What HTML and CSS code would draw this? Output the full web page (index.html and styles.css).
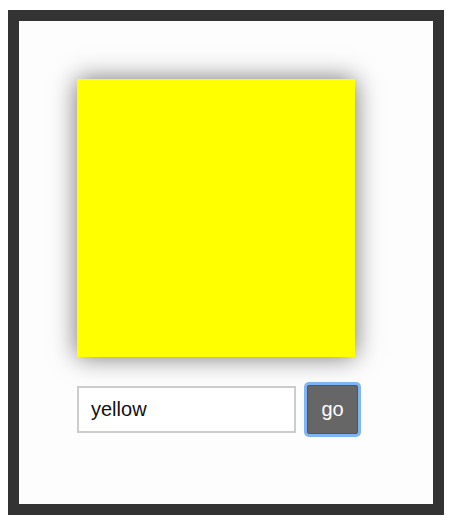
FILE: index.html
```html
<!DOCTYPE html>
<html lang="en">
<head>
    <meta charset="UTF-8">
    <title>Color Box</title>
    <link rel="stylesheet" href="styles.css">
</head>
<body>
    <div class="frame">
        <div class="swatch"></div>
        <div class="controls">
            <input class="color-input" type="text" value="yellow">
            <button class="go-btn">go</button>
        </div>
    </div>
</body>
</html>
```
FILE: styles.css
```css
body {
    margin: 0;
    padding: 10px 6px 10px 8px;
    background: #fff;
    font-family: "Liberation Sans", Arial, sans-serif;
}

.frame {
    width: 436px;
    height: 505px;
    box-sizing: border-box;
    border: 11px solid #333;
    background: #fdfdfd;
    padding: 58px;
}

.swatch {
    width: 278px;
    height: 278px;
    background: #ff0;
    box-shadow: 0 0 24px rgba(0, 0, 0, 0.55);
}

.controls {
    display: flex;
    align-items: center;
    margin-top: 28px;
    gap: 11px;
}

.color-input {
    width: 219px;
    height: 47px;
    box-sizing: border-box;
    border: 2px solid #ccc;
    padding: 0 12px;
    font-family: inherit;
    font-size: 20px;
    color: #111;
    background: #fff;
    outline: none;
}

.go-btn {
    width: 51px;
    height: 49px;
    border: 1px solid #555;
    background: #666;
    color: #fff;
    font-family: inherit;
    font-size: 20px;
    font-weight: normal;
    padding: 0;
    border-radius: 2px;
    box-shadow: 0 0 0 3px #7fb4f5;
}
```
